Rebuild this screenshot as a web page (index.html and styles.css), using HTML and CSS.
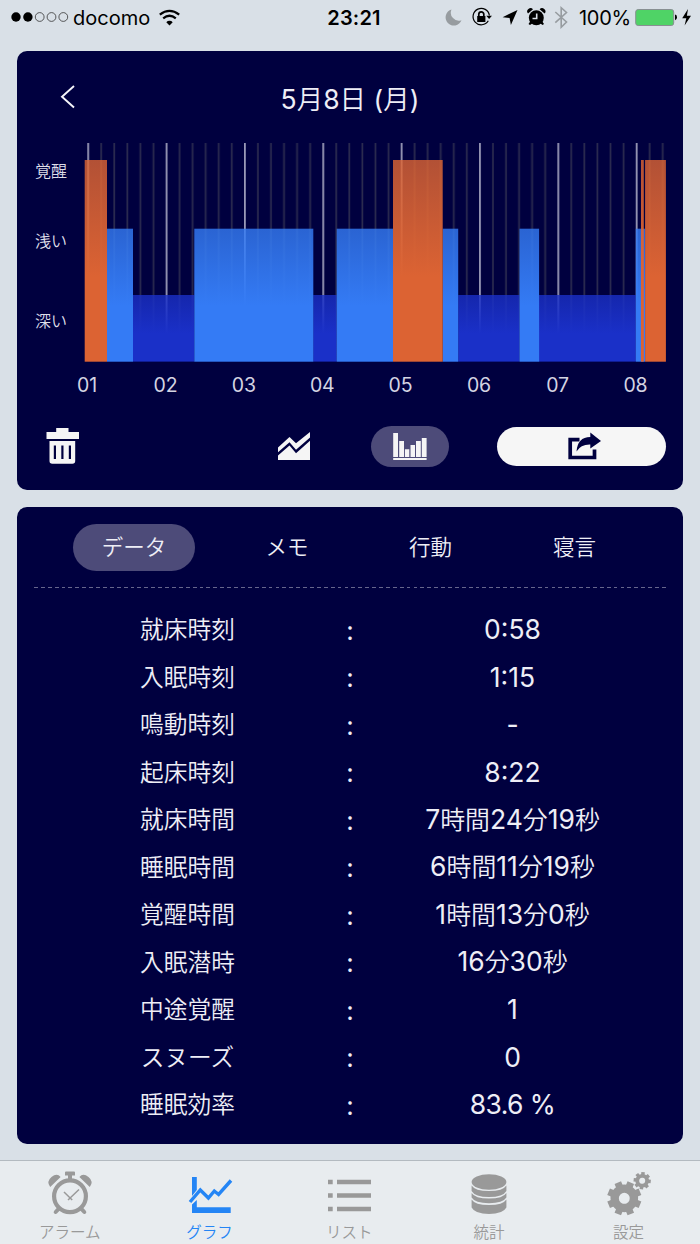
FILE: index.html
```html
<!DOCTYPE html>
<html lang="ja">
<head>
<meta charset="utf-8">
<title>グラフ</title>
<link rel="stylesheet" href="styles.css">
</head>
<body>
<div class="screen">
  <header class="status">
    <div class="status-left">
      <svg width="58" height="12" viewBox="11 11 58 12"><circle cx="16" cy="17" r="4.700"/><circle cx="27.900" cy="17" r="4.700"/><g fill="none" stroke="#333" stroke-width=".8"><circle cx="39.700" cy="17" r="4.400"/><circle cx="51.500" cy="17" r="4.400"/><circle cx="63.300" cy="17" r="4.400"/></g></svg>
      <span class="carrier">docomo</span>
      <svg class="wifi" width="22" height="17" viewBox="159 8 22 17"><path d="M166.300 21.200L169.500 24.400L172.700 21.200A4.500 4.500 0 0 0 166.300 21.200Z"/><g fill="none" stroke="#000" stroke-width="2.300"><path d="M163.200 17.300Q169.500 12.300 175.800 17.300"/><path d="M159.800 13.600Q169.500 6.100 179.200 13.600"/></g></svg>
    </div>
    <div class="clock">23:21</div>
    <div class="status-right">
      <svg width="126" height="24" viewBox="444 5 126 24">
        <path fill="#979ca0" d="M451.500 9.500A8.200 8.200 0 1 0 461.500 20.200A8 8 0 0 1 451.500 9.500Z"/>
        <g fill="none" stroke="#000" stroke-width="1.200"><path d="M488.300 20.800A8.200 8.200 0 1 1 489.400 15.500"/><path stroke-width="1.700" d="M478.800 16.500V14.300A2.500 2.500 0 0 1 483.800 14.300V16.500"/></g>
        <path d="M477.200 16H485.400V22H477.200ZM486.300 15.700H492L489.100 19Z"/>
        <path d="M517.500 10L502.600 17.200L509.600 18L510.900 25Z"/>
        <circle cx="536.300" cy="17.800" r="7.500"/><path d="M528 13.500A3.200 3.200 0 0 1 533 9.300ZM544.600 13.500A3.200 3.200 0 0 0 539.600 9.300ZM530.500 21L528.500 24L530 25L533 23ZM542 21L544 24L542.600 25L539.600 23Z"/><path fill="none" stroke="#d9e0e7" stroke-width="1.600" d="M536.700 13.500V18.500H532.500"/>
        <path fill="none" stroke="#979ca0" stroke-width="1.600" d="M555.300 12L566.500 22L561.200 27.200V7.700L566.500 12.500L555.300 22.600"/>
      </svg>
      <span class="percent">100%</span>
      <svg width="58" height="20" viewBox="634 7 58 20"><rect x="635.700" y="9.500" width="38" height="16" rx="2.500" fill="#4fd366" stroke="#888f92"/><path d="M675 14.500Q677 14.700 677 17.300T675 20.200Z"/><path d="M688 9L682.200 18.200H686.300L684.600 25.500L691 15.700H686.900Z"/></svg>
    </div>
  </header>

  <section class="card chart-card">
    <div class="card-head">
      <svg class="back" width="16" height="26" viewBox="60 84 16 26"><path d="M74 86L62 96.700L74 107.500" fill="none" stroke="#f5f5fa" stroke-width="1.900"/></svg>
      <h1>5<i>月</i>8<i>日</i> (<i>月</i>)</h1>
    </div>
    <svg class="chart" width="666" height="262" viewBox="17 140 666 262">
      <defs>
        <linearGradient id="awake" x2="0" y2="1"><stop stop-color="#df6533" stop-opacity=".8"/><stop offset=".58" stop-color="#dc6333"/></linearGradient>
        <linearGradient id="light" x2="0" y2="1"><stop stop-color="#347bf5" stop-opacity=".81"/><stop offset=".58" stop-color="#347bf5"/></linearGradient>
        <linearGradient id="deep" x2="0" y2="1"><stop stop-color="#1a30c8" stop-opacity=".8"/><stop offset=".58" stop-color="#1a30c8"/></linearGradient>
        <pattern id="grid" x="87.300" y="143" width="78.350" height="219" patternUnits="userSpaceOnUse">
          <path fill="#9999b6" d="M0 0H1.800V219H0Z"/><path fill="#2b2b4f" d="M13.060 0h1.700v219h-1.700zM26.120 0h1.700v219h-1.700zM39.180 0h1.700v219h-1.700zM52.230 0h1.700v219h-1.700zM65.290 0h1.700v219h-1.700z"/>
        </pattern>
      </defs>
      <rect x="85" y="143" width="581" height="218" fill="url(#grid)"/>
      <g fill="url(#deep)"><rect x="133" y="295" width="61.300" height="66.600"/><rect x="313.200" y="295" width="23.500" height="66.600"/><rect x="458.200" y="295" width="61.300" height="66.600"/><rect x="539" y="295" width="96.800" height="66.600"/></g>
      <g fill="url(#light)"><rect x="107" y="228.700" width="26" height="133"/><rect x="194.300" y="228.700" width="119" height="133"/><rect x="336.700" y="228.700" width="56.300" height="133"/><rect x="442.700" y="228.700" width="15.500" height="133"/><rect x="519.500" y="228.700" width="19.600" height="133"/><rect x="635.800" y="228.700" width="9.400" height="133"/></g>
      <g fill="url(#awake)"><rect x="84.700" y="160" width="22.300" height="201.700"/><rect x="393" y="160" width="49.700" height="201.700"/><rect x="641" y="160" width="2.800" height="201.700"/><rect x="645.100" y="160" width="20.800" height="201.700"/></g>
      <g class="levels"><text x="51" y="176.500">覚醒</text><text x="51" y="246.500">浅い</text><text x="51" y="327">深い</text></g>
      <g class="hours"><text x="87" y="392">01</text><text x="165.500" y="392">02</text><text x="243.800" y="392">03</text><text x="322.200" y="392">04</text><text x="400.500" y="392">05</text><text x="479" y="392">06</text><text x="557.500" y="392">07</text><text x="635.500" y="392">08</text></g>
    </svg>
    <div class="tools">
      <svg class="trash" width="34" height="38" viewBox="46 427 34 38"><path fill="#f5f5f5" fill-rule="evenodd" d="M46.500 432H56.200V428H68.500V432H79V439H46.500ZM49.500 441H75.200V461Q75.200 463.800 72.400 463.800H52.300Q49.500 463.800 49.500 461ZM53.800 445.500V459H56V445.500ZM61.300 445.500V459H63.500V445.500ZM68.800 445.500V459H71V445.500Z"/></svg>
      <svg class="area" width="34" height="30" viewBox="277 431 34 30"><path fill="#f5f5f5" d="M278 447.500L289.500 437L296 443.200L310 432V437.500L296 449.700L289.500 442.200L278 452.300ZM278 455.500L289.500 445.500L296 453.200L310 440.700V460H278Z"/></svg>
      <div class="bar-button"><svg width="36" height="30" viewBox="392 432 36 30"><path fill="#f5f5f5" d="M393.200 434H398V458H393.200ZM399.200 442H404V458H399.200ZM404.900 450.200H409.300V458H404.900ZM410.500 446H415V458H410.500ZM416 442H420.800V458H416ZM421.800 439H426.600V458H421.800ZM393.200 459H426.600V461H393.200Z"/></svg></div>
      <div class="share"><svg width="36" height="30" viewBox="566 431 36 30"><path fill="none" stroke="#00003f" stroke-width="3.700" d="M579.500 439.600H570.200V457.500H594.500V449.500"/><path fill="#00003f" d="M576.500 451.500Q577.500 437 590.300 436.900V432.500L601 441L590.300 448.500V444.500Q580.800 444.200 576.500 451.500Z"/></svg></div>
    </div>
  </section>

  <section class="card data-card">
    <nav class="tabs"><span class="tab tab-on">データ</span><span class="tab">メモ</span><span class="tab">行動</span><span class="tab">寝言</span></nav>
    <div class="dashes"></div>
    <div class="rows">
      <div class="row"><span class="key">就床時刻</span><span class="colon">:</span><span class="val">0:58</span></div>
      <div class="row"><span class="key">入眠時刻</span><span class="colon">:</span><span class="val">1:15</span></div>
      <div class="row"><span class="key">鳴動時刻</span><span class="colon">:</span><span class="val">-</span></div>
      <div class="row"><span class="key">起床時刻</span><span class="colon">:</span><span class="val">8:22</span></div>
      <div class="row"><span class="key">就床時間</span><span class="colon">:</span><span class="val">7<i>時間</i>24<i>分</i>19<i>秒</i></span></div>
      <div class="row"><span class="key">睡眠時間</span><span class="colon">:</span><span class="val">6<i>時間</i>11<i>分</i>19<i>秒</i></span></div>
      <div class="row"><span class="key">覚醒時間</span><span class="colon">:</span><span class="val">1<i>時間</i>13<i>分</i>0<i>秒</i></span></div>
      <div class="row"><span class="key">入眠潜時</span><span class="colon">:</span><span class="val">16<i>分</i>30<i>秒</i></span></div>
      <div class="row"><span class="key">中途覚醒</span><span class="colon">:</span><span class="val">1</span></div>
      <div class="row"><span class="key">スヌーズ</span><span class="colon">:</span><span class="val">0</span></div>
      <div class="row"><span class="key">睡眠効率</span><span class="colon">:</span><span class="val percent-val">83.6 %</span></div>
    </div>
  </section>

  <footer class="tabbar">
    <div class="item"><svg width="48" height="48" viewBox="46 1169 48 48"><g fill="none" stroke="#999"><circle cx="70" cy="1196.300" r="15.900" stroke-width="4.200"/><path stroke-width="4" stroke-linecap="round" d="M58.500 1209L55.700 1212M81.500 1209L84.300 1212"/><path stroke-width="1.500" d="M64 1192L72.200 1200M79 1189.500L68 1200"/></g><path fill="#999" d="M65 1172.500Q65 1171.500 66 1171.500H74Q75 1171.500 75 1172.500V1175.500H72V1180H68V1175.500H65ZM60.600 1177Q57 1172.500 51.500 1177T50.200 1187ZM79.400 1177Q83 1172.500 88.500 1177T89.800 1187Z"/></svg><span>アラーム</span></div>
    <div class="item item-on"><svg width="48" height="48" viewBox="186 1169 48 48"><path fill="#2485f5" d="M192 1177H196.800V1190L192 1196ZM192 1204.500L196.800 1200V1207.300H230.700V1213H192Z"/><path fill="none" stroke="#2485f5" stroke-width="3.400" d="M190 1202L200.300 1190L208.400 1198L214.300 1191L218.600 1194.500L231 1180.500"/></svg><span>グラフ</span></div>
    <div class="item"><svg width="48" height="48" viewBox="325 1169 48 48"><path fill="#999" d="M328 1179.700h4.700v4.600H328zM337 1179.700h34v4.600H337zM328 1193.200h4.700v4.600H328zM337 1193.200h34v4.600H337zM328 1206.700h4.700v4.600H328zM337 1206.700h34v4.600H337z"/></svg><span>リスト</span></div>
    <div class="item"><svg width="48" height="48" viewBox="465 1169 48 48"><g fill="#999"><ellipse cx="489" cy="1182" rx="17.400" ry="7.700"/><path d="M471.600 1185.500Q475 1191 489 1191T506.400 1185.500V1191Q503 1197 489 1197T471.600 1191ZM471.600 1193Q475 1198.500 489 1198.500T506.400 1193V1197.500Q503 1203.200 489 1203.200T471.600 1197.500ZM471.600 1199.500Q475 1205 489 1205T506.400 1199.500V1207.500Q503 1214 489 1214T471.600 1207.500Z"/></g></svg><span>統計</span></div>
    <div class="item"><svg width="48" height="48" viewBox="605 1169 48 48">
      <g transform="translate(624.300 1198.300) rotate(22.500)"><path stroke="#999" stroke-width="7" d="M0 -17V17M-17 0H17M-12 -12L12 12M-12 12L12 -12"/><circle r="13.800" fill="#999"/><circle r="5.500" fill="#e8ecef"/></g>
      <g transform="translate(642.200 1180.700) rotate(6)"><path stroke="#999" stroke-width="3.500" d="M0 -8.600V8.600M-8.600 0H8.600M-6.100 -6.100L6.100 6.100M-6.100 6.100L6.100 -6.100"/><circle r="6.800" fill="#999"/><circle r="3" fill="#e8ecef"/></g>
    </svg><span>設定</span></div>
  </footer>
</div>
</body>
</html>
```
FILE: styles.css
```css
* { box-sizing: border-box; }
body { margin: 0; font-family: Inter, "Noto Sans CJK JP", sans-serif; }
svg { display: block; flex: none; }
i { font-style: normal; font-weight: 350; }
.screen { width: 700px; height: 1244px; background: #d9e0e7; display: flex; flex-direction: column; }
.status { height: 51px; display: grid; grid-template-columns: 300px 108px 292px; color: #000; font-size: 20px; line-height: 24px; padding-top: 5px; align-items: start; }
.status-left { display: flex; align-items: center; padding-left: 11px; height: 24px; }
.carrier { width: 77px; margin-left: 4px; padding-top: 2px; white-space: nowrap; letter-spacing: 0; }
.wifi { margin-left: 9px; }
.clock { text-align: center; font-weight: 600; letter-spacing: .2px; padding-top: 1px; }
.status-right { display: flex; align-items: center; padding-left: 36px; height: 24px; }
.percent { width: 54px; margin-left: 9px; padding-top: 2px; letter-spacing: -.3px; }
.status-right svg:last-child { margin-left: 1px; }
.card { margin: 0 17px; background: #00003f; border-radius: 10px; color: #eeeef6; }
.chart-card { height: 439px; display: flex; flex-direction: column; }
.card-head { height: 89px; padding: 3px 43px 0; display: grid; grid-template-columns: 16px 1fr 16px; align-items: center; }
.card-head h1 { margin: 0; padding-top: 3px; font-size: 26.5px; font-weight: 400; line-height: 36px; text-align: center; }
.chart { font-family: Inter, "Noto Sans CJK JP", sans-serif; }
.levels { font-size: 16px; font-weight: 350; fill: #dedee9; text-anchor: middle; }
.hours { font-size: 19.5px; font-weight: 400; fill: #d4d4e2; text-anchor: middle; letter-spacing: -.2px; }
.tools { height: 88px; padding: 0 17px 0 29px; display: flex; align-items: center; }
.area { margin-left: 197px; }
.bar-button { width: 78px; height: 41px; margin-left: 60px; border-radius: 21px; background: #4d4b79; display: flex; align-items: center; justify-content: center; }
.share { width: 169px; height: 39px; margin-left: auto; border-radius: 20px; background: #f6f6f6; display: flex; align-items: center; justify-content: center; padding-left: 4px; }
.data-card { height: 637px; margin-top: 17px; }
.tabs { height: 80px; padding: 17px 0 0 40.5px; display: grid; grid-template-columns: 153px 153px 134px 154px; justify-items: center; }
.tab { height: 47px; line-height: 47px; font-size: 21.5px; font-weight: 350; }
.tab-on { width: 121.5px; text-align: center; border-radius: 24px; background: #4d4b79; }
.dashes { height: 1px; margin: 0 17px; background: repeating-linear-gradient(90deg, #66668c 0 3.8px, transparent 3.8px 6.9px); }
.rows { padding: 18.5px 17px 0; }
.row { height: 47.5px; display: grid; grid-template-columns: 307px 18px 307px; align-items: center; text-align: center; line-height: 36px; font-size: 26px; font-weight: 350; }
.key { font-size: 23.7px; }
.colon { font-weight: 400; padding-top: 1px; }
.val { font-size: 26.5px; font-weight: 400; padding-bottom: 2px; }
.val i { font-size: 24.9px; }
.percent-val { letter-spacing: -.6px; }
.tabbar { height: 84px; margin-top: auto; border-top: 1px solid #b3bac0; background: #e8ecef; display: grid; grid-template-columns: repeat(5, 139.7px); color: #999; font-size: 15.5px; font-weight: 350; }
.item { display: flex; flex-direction: column; align-items: center; padding-top: 8px; line-height: 26px; }
.item span { margin-top: 3px; }
.item-on { color: #2485f5; }
```
